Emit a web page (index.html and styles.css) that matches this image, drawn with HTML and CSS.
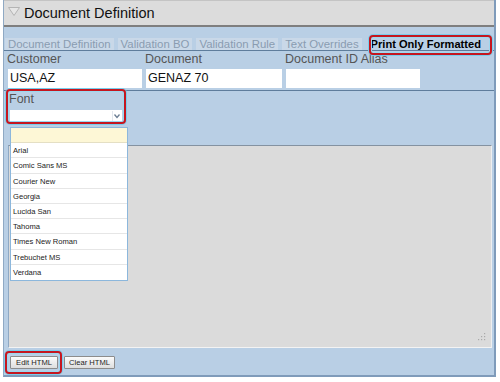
FILE: index.html
```html
<!DOCTYPE html>
<html>
<head>
<meta charset="utf-8">
<link rel="stylesheet" href="styles.css">
</head>
<body>
<div class="panel">
  <div class="titlebar">
    <svg class="tri" width="12" height="9" viewBox="0 0 12 9"><polygon points="0.5,0.5 11.5,0.5 6,8.5" fill="#e6e6e6" stroke="#b4b4b4" stroke-width="1"/></svg>
    <span class="title">Document Definition</span>
  </div>
  <div class="tabs">
    <div class="tab">Document Definition</div>
    <div class="tab">Validation BO</div>
    <div class="tab">Validation Rule</div>
    <div class="tab">Text Overrides</div>
    <div class="tab active">Print Only Formatted</div>
  </div>
  <div class="fields">
    <div class="field f1"><div class="label">Customer</div><div class="input">USA,AZ</div></div>
    <div class="field f2"><div class="label">Document</div><div class="input">GENAZ 70</div></div>
    <div class="field f3"><div class="label">Document ID Alias</div><div class="input"></div></div>
  </div>
  <div class="divider"></div>
  <div class="font-section">
    <div class="label font-label">Font</div>
    <div class="select">
      <span class="arrow"><svg width="8" height="8" viewBox="0 0 8 8"><polyline points="1.5,2.5 4,5.5 6.5,2.5" fill="none" stroke="#6a7d93" stroke-width="1.3"/></svg></span>
    </div>
  </div>
  <div class="editor">
    <svg class="grip" width="9" height="9" viewBox="0 0 9 9">
      <rect x="7" y="1" width="1.2" height="1.2" fill="#a9a9a9"/>
      <rect x="4" y="4" width="1.2" height="1.2" fill="#a9a9a9"/>
      <rect x="7" y="4" width="1.2" height="1.2" fill="#a9a9a9"/>
      <rect x="1" y="7" width="1.2" height="1.2" fill="#a9a9a9"/>
      <rect x="4" y="7" width="1.2" height="1.2" fill="#a9a9a9"/>
      <rect x="7" y="7" width="1.2" height="1.2" fill="#a9a9a9"/>
    </svg>
  </div>
  <div class="footer">
    <button class="btn edit">Edit HTML</button>
    <button class="btn clear">Clear HTML</button>
  </div>

  <ul class="dropdown">
    <li class="blank"></li>
    <li>Arial</li>
    <li>Comic Sans MS</li>
    <li>Courier New</li>
    <li>Georgia</li>
    <li>Lucida San</li>
    <li>Tahoma</li>
    <li>Times New Roman</li>
    <li>Trebuchet MS</li>
    <li>Verdana</li>
  </ul>

  <div class="hl hl-tab"></div>
  <div class="hl hl-font"></div>
  <div class="hl hl-btn"></div>
</div>
</body>
</html>
```
FILE: styles.css
```css
* { box-sizing: border-box; }
html, body { margin: 0; padding: 0; background: #ffffff; }
body { font-family: "Liberation Sans", Arial, sans-serif; }

.panel {
  position: relative;
  margin-left: 3px;
  width: 493px;
  background: #b9cfe5;
  border-left: 1px solid #8fa9c4;
  border-right: 2px solid #7f9bba;
  border-bottom: 2px solid #7f9bba;
}

.titlebar {
  height: 27px;
  display: flex;
  align-items: center;
  background: #dcdcdc;
  border-top: 1px solid #c4c4c4;
  border-bottom: 2px solid #7f7f7f;
  padding-left: 4px;
}
.tri { margin-top: -3px; margin-right: 4px; }
.title { font-size: 14.5px; color: #111; }

.tabs {
  margin-top: 11px;
  display: flex;
  gap: 4px;
  padding-left: 1px;
  border-bottom: 1px solid #5f7d9c;
}
.tab {
  height: 12px;
  line-height: 12px;
  padding: 0 3px;
  font-size: 11.4px;
  color: #8a9cb1;
  background: #c9d8e8;
  white-space: nowrap;
}
.tab.active {
  color: #000;
  font-weight: bold;
  font-size: 11.1px;
  background: #b9cfe5;
  padding: 0 4px 0 5px;
}

.fields {
  display: flex;
  gap: 4px;
  padding: 0 0 2px 4px;
}
.field { display: flex; flex-direction: column; }
.f1 { width: 134px; }
.f2 { width: 136px; }
.f3 { width: 134px; }
.label {
  height: 17px;
  line-height: 17px;
  font-size: 12.5px;
  color: #555;
  margin-left: -1px;
  white-space: nowrap;
}
.input {
  margin-top: 1px;
  height: 19px;
  line-height: 19px;
  background: #fff;
  font-size: 12.5px;
  color: #111;
  padding-left: 2px;
}

.divider { height: 1px; background: #5f7d9c; }

.font-section {
  padding: 0 0 23px 5px;
}
.font-label { margin-left: 0; }
.select {
  margin-top: 2px;
  margin-left: 1px;
  width: 112px;
  height: 12px;
  background: #fff;
  display: flex;
  justify-content: flex-end;
  align-items: center;
}
.arrow {
  width: 9px;
  height: 11px;
  display: flex;
  align-items: center;
  justify-content: center;
  margin-right: 1px;
  border-left: 1px solid #e3e8ee;
}

.editor {
  position: relative;
  margin-left: 4px;
  width: 484px;
  height: 203px;
  background: #dbdbdb;
  border-top: 1px solid #8492a1;
  border-left: 1px solid #8fa9c4;
  border-right: 1px solid #efefef;
  border-bottom: 1px solid #f3f3f3;
}
.grip { position: absolute; right: 5px; bottom: 6px; }

.footer {
  height: 27px;
  padding: 8px 0 0 6px;
  display: flex;
  gap: 6px;
  align-items: flex-start;
}
.btn {
  height: 13px;
  padding: 0;
  font-family: "Liberation Sans", Arial, sans-serif;
  font-size: 7.6px;
  color: #1e1e1e;
  background: linear-gradient(#fbfbfb, #dedede);
  border: 1px solid #8c8c8c;
  border-radius: 1px;
  line-height: 11px;
}
.edit { width: 48px; }
.clear { width: 51px; }

.dropdown {
  position: absolute;
  left: 6px;
  top: 127px;
  width: 118px;
  margin: 0;
  padding: 0;
  list-style: none;
  background: #fff;
  border: 1px solid #8cb7dc;
}
.dropdown li {
  height: 15.2px;
  line-height: 15px;
  padding-left: 2px;
  font-size: 7.6px;
  color: #222;
  border-bottom: 1px solid #e6e6e6;
}
.dropdown li:last-child { border-bottom: none; }
.dropdown li.blank { background: #fdf7d6; border-bottom: 1px solid #e4dfc4; }

.hl {
  position: absolute;
  border: 2px solid #c5161f;
  border-radius: 4px;
  box-shadow: 0 0 0 1px #79cdec, inset 0 0 0 1px #9bd8ef;
}
.hl-tab { left: 365px; top: 35px; width: 123px; height: 20px; }
.hl-font { left: 2px; top: 89px; width: 120px; height: 35px; }
.hl-btn { left: 1px; top: 351px; width: 57px; height: 23px; }
```
